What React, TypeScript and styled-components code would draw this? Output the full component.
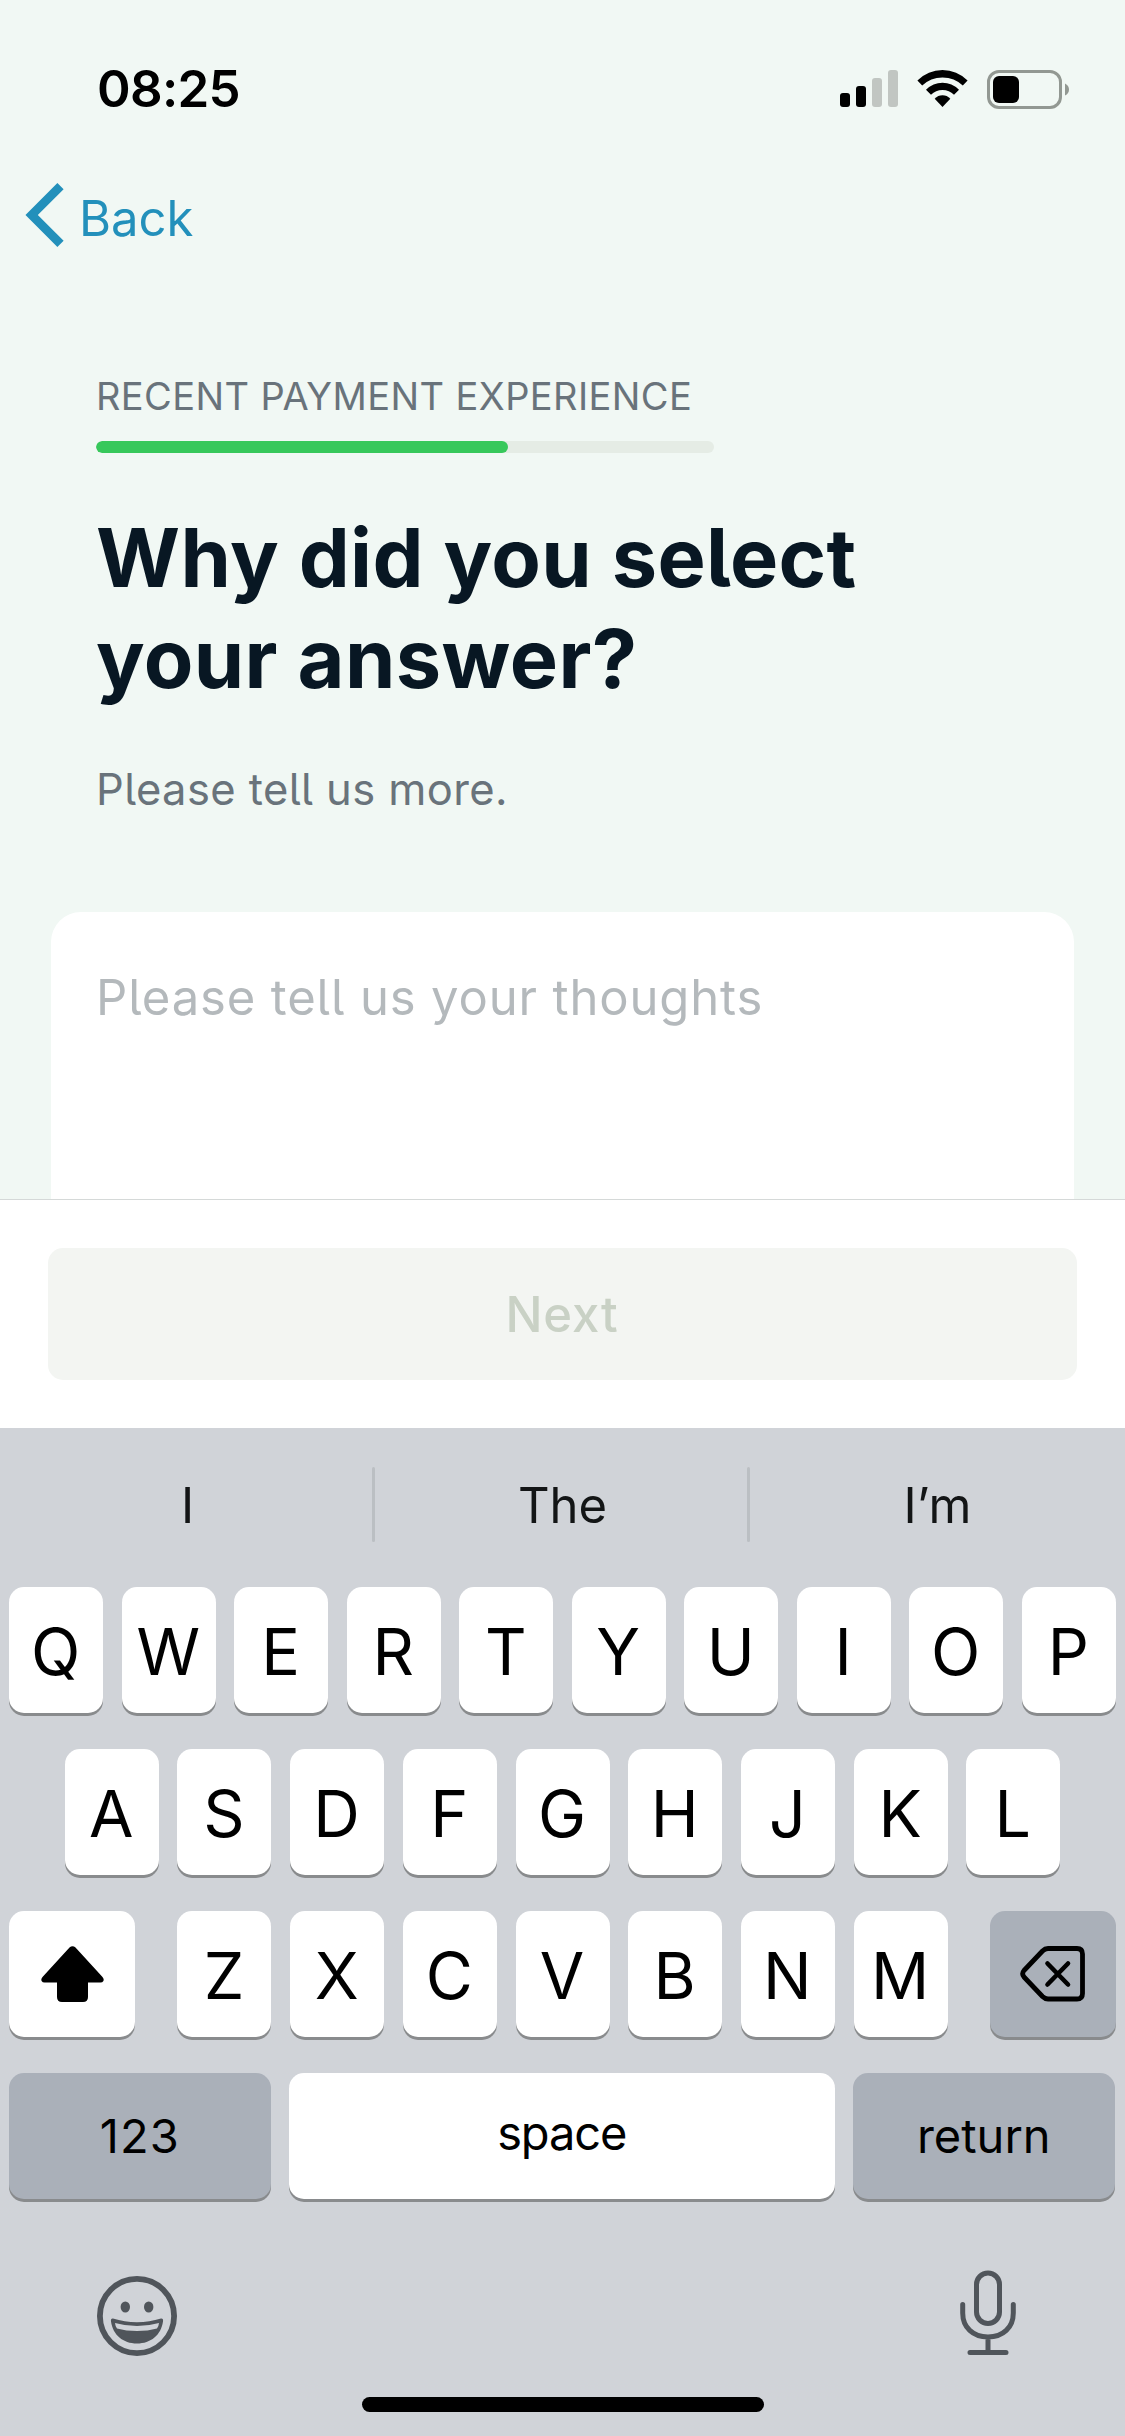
import React from "react";
import styled, { createGlobalStyle } from "styled-components";

const GlobalStyle = createGlobalStyle`
  *, *::before, *::after { box-sizing: border-box; }
  body {
    margin: 0;
    background: #f1f8f4;
    font-family: Inter, Roboto, "Liberation Sans", sans-serif;
    -webkit-font-smoothing: antialiased;
  }
  button { font-family: inherit; border: 0; margin: 0; padding: 0; background: none; }
  svg { display: block; flex: none; }
`;

const Screen = styled.div`
  width: 1125px;
  height: 2436px;
  display: flex;
  flex-direction: column;
  overflow: hidden;
  background: #f1f8f4;
`;

const StatusBar = styled.header`
  height: 178px;
  padding: 0 55px 0 97px;
  display: flex;
  align-items: center;
  justify-content: space-between;
  color: #000;
`;

const Clock = styled.span`
  padding-bottom: 2px;
  font-size: 51px;
  font-weight: 600;
  letter-spacing: -0.7px;
`;

const StatusIcons = styled.div`
  display: flex;
  align-items: center;
  gap: 19px;
`;

const NavBar = styled.nav`
  height: 74px;
  padding-left: 25px;
  display: flex;
`;

const BackButton = styled.button`
  display: flex;
  align-items: center;
  gap: 14px;
  color: #2390bb;
`;

const BackLabel = styled.span`
  padding-top: 6px;
  font-size: 49px;
  font-weight: 400;
`;

const Question = styled.main`
  flex: 1;
  min-height: 0;
  padding: 121px 51px 0;
  display: flex;
  flex-direction: column;
  overflow: hidden;
  font-feature-settings: "cv05";
`;

const Intro = styled.section`
  padding-left: 45px;
  display: flex;
  flex-direction: column;
`;

const Section = styled.div`
  font-size: 38px;
  line-height: 46px;
  font-weight: 400;
  letter-spacing: 0.41px;
  color: #69737b;
`;

const ProgressTrack = styled.div`
  width: 618px;
  height: 12px;
  margin-top: 22px;
  border-radius: 6px;
  overflow: hidden;
  background: #e5ece5;
`;

const ProgressFill = styled.div<{ $ratio: number }>`
  width: ${(p) => p.$ratio * 100}%;
  height: 100%;
  border-radius: 6px;
  background: #37c85b;
`;

const Title = styled.h1`
  margin: 55px 0 0;
  max-width: 800px;
  font-size: 81px;
  line-height: 101px;
  font-weight: 700;
  letter-spacing: 0.4px;
  color: #081723;
`;

const Hint = styled.p`
  margin: 53px 0 0;
  font-size: 43.5px;
  line-height: 52px;
  font-weight: 400;
  letter-spacing: 0.4px;
  color: #69737b;
`;

const AnswerBox = styled.div`
  flex: 1;
  margin-top: 97px;
  padding: 56px 45px 0;
  border-radius: 30px 30px 0 0;
  background: #fff;
`;

const Placeholder = styled.span`
  display: block;
  font-size: 49px;
  line-height: 60px;
  font-weight: 400;
  letter-spacing: 0.85px;
  color: #b4b9bc;
`;

const Footer = styled.footer`
  height: 229px;
  padding: 48px;
  border-top: 1px solid #d5d9d8;
  background: #fff;
`;

const NextButton = styled.button`
  width: 100%;
  height: 132px;
  padding-right: 1px;
  border-radius: 15px;
  background: #f3f5f2;
  color: #c9d1c5;
  font-size: 49px;
  font-weight: 500;
  letter-spacing: 0.9px;
`;

const Keyboard = styled.section`
  height: 1008px;
  display: flex;
  flex-direction: column;
  background: #d0d3d8;
`;

const Suggestions = styled.div`
  height: 154px;
  margin-bottom: 5px;
  display: flex;
  align-items: center;
`;

const Suggestion = styled.span`
  flex: 1;
  text-align: center;
  font-size: 49px;
  color: #131516;
`;

const Divider = styled.i`
  width: 3px;
  height: 75px;
  margin: -1px 0 0 -3px;
  border-radius: 2px;
  background: #bbbfc3;
`;

const Rows = styled.div`
  padding: 0 9px;
  display: flex;
  flex-direction: column;
  gap: 36px;
`;

const KeyRow = styled.div<{ $justify?: string; $gap?: number }>`
  display: flex;
  justify-content: ${(p) => p.$justify ?? "center"};
  gap: ${(p) => p.$gap ?? 18.7}px;
`;

const KeyGroup = styled.div`
  display: flex;
  gap: 18.7px;
`;

const Key = styled.button<{ $width?: number; $dark?: boolean }>`
  width: ${(p) => p.$width ?? 94}px;
  height: 126px;
  padding: 3px 1px 0 0;
  display: flex;
  align-items: center;
  justify-content: center;
  border-radius: 15px;
  background: ${(p) => (p.$dark ? "#aab0b9" : "#fff")};
  box-shadow: 0 3px 0 #898b8d;
  color: #000;
  font-size: 64.5px;
  font-weight: 400;
`;

const IconKey = styled(Key)`
  padding: 0;
`;

const WordKey = styled(Key)<{ $lift?: number; $tracking?: number }>`
  padding: 0 0 ${(p) => p.$lift ?? 1}px;
  font-size: 47px;
  letter-spacing: ${(p) => p.$tracking ?? 0}px;
`;

const BottomBar = styled.div`
  margin-top: 69px;
  padding: 0 109px 0 97px;
  display: flex;
  justify-content: space-between;
`;

const MicSlot = styled.div`
  margin-top: 2px;
`;

const EmojiSlot = styled.div`
  margin-top: 8px;
`;

const HomeIndicator = styled.div`
  width: 402px;
  height: 15px;
  margin: auto auto 24px;
  border-radius: 8px;
  background: #000;
`;

const SignalIcon = () => (
  <svg width="58" height="38" viewBox="0 0 58 38">
    <rect x="0" y="23" width="10" height="14" rx="3" />
    <rect x="16" y="16" width="10" height="21" rx="3" />
    <rect x="32" y="8" width="10" height="29" rx="3" fill="#c1c6c2" />
    <rect x="48" y="0" width="10" height="37" rx="3" fill="#c1c6c2" />
  </svg>
);

const WifiIcon = () => (
  <svg width="51" height="38" viewBox="0 0 51 38">
    <path d="M0.4 10.6Q11 0 25.5 0Q40 0 50.6 10.6L45.8 15.5Q37.5 7.4 25.5 7.4Q13.5 7.4 5.2 15.5Z" />
    <path d="M9 19.7Q16 12.7 25.5 12.7Q35 12.7 42 19.7L37 24.7Q32.3 20 25.5 20Q18.7 20 14 24.7Z" />
    <path d="M17.7 28.7Q21 25.3 25.5 25.3Q30 25.3 33.3 28.7L25.5 37Z" />
  </svg>
);

const BatteryIcon = () => (
  <svg width="83" height="39" viewBox="0 0 83 39">
    <rect x="1.5" y="1.5" width="72" height="36" rx="10.5" fill="none" stroke="#929892" strokeWidth="3" />
    <rect x="6" y="6" width="26" height="27" rx="6" />
    <path d="M78 13.5Q82 15.5 82 19.5Q82 23.5 78 25.5Z" fill="#929892" />
  </svg>
);

const ChevronIcon = () => (
  <svg width="40" height="66" viewBox="0 0 40 66">
    <path d="M35.5 4.2L6.7 33L35.5 61.8" fill="none" stroke="currentColor" strokeWidth="8.8" />
  </svg>
);

const ShiftIcon = () => (
  <svg width="63" height="56" viewBox="0 0 63 56">
    <path d="M28.5 1.5Q31.5 -1.2 34.5 1.5L61.5 31Q63.5 33.5 62.2 35.2Q61.5 36.5 59.5 36.5H47V51Q47 56 42 56H21Q16 56 16 51V36.5H3.5Q1.5 36.5 0.8 35.2Q-0.5 33.5 1.5 31Z" />
  </svg>
);

const DeleteIcon = () => (
  <svg width="66" height="56" viewBox="0 0 66 56" fill="none" stroke="#000" strokeLinecap="round" strokeLinejoin="round">
    <path d="M28 2.5H57Q62.5 2.5 62.5 8V47.5Q62.5 53 57 53H28Q25 53 22.5 50.5L4 31Q1.3 27.75 4 24.5L22.5 5Q25 2.5 28 2.5Z" strokeWidth="4.8" />
    <path d="M27.5 17.5L48 38.5M48 17.5L27.5 38.5" strokeWidth="4.6" />
  </svg>
);

const EmojiIcon = () => (
  <svg width="80" height="80" viewBox="0 0 80 80" fill="#50555b">
    <circle cx="40" cy="40" r="37.1" fill="none" stroke="#50555b" strokeWidth="5.8" />
    <ellipse cx="28.3" cy="31" rx="4.7" ry="5.5" />
    <ellipse cx="51.7" cy="31" rx="4.7" ry="5.5" />
    <path
      fillRule="evenodd"
      d="M16 42.5Q27.5 46.2 40 46.2Q52.5 46.2 64 42.5Q66.5 42.2 66 45.5C64 59 54 67.5 40 67.5C26 67.5 16 59 14 45.5Q13.5 42.2 16 42.5ZM18 47Q18.3 50.3 20 52.5Q29 55 40 55Q51 55 60 52.5Q61.7 50.3 62 47Q51.5 50 40 50Q28.5 50 18 47Z"
    />
  </svg>
);

const MicIcon = () => (
  <svg width="56" height="86" viewBox="0 0 56 86" fill="none" stroke="#50555b" strokeWidth="5" strokeLinecap="round">
    <rect x="16.5" y="3" width="23" height="50.5" rx="11.5" />
    <path d="M2.7 34.5V43C2.7 57.5 13 67 28 67S53.3 57.5 53.3 43V34.5M28 67V82M10 82.5H46" />
  </svg>
);

const letters = (row: string) => row.split("").map((c) => <Key key={c}>{c}</Key>);

export default function App() {
  return (
    <>
      <GlobalStyle />
      <Screen>
        <StatusBar>
          <Clock>08:25</Clock>
          <StatusIcons>
            <SignalIcon />
            <WifiIcon />
            <BatteryIcon />
          </StatusIcons>
        </StatusBar>
        <NavBar>
          <BackButton>
            <ChevronIcon />
            <BackLabel>Back</BackLabel>
          </BackButton>
        </NavBar>
        <Question>
          <Intro>
            <Section>RECENT PAYMENT EXPERIENCE</Section>
            <ProgressTrack>
              <ProgressFill $ratio={2 / 3} />
            </ProgressTrack>
            <Title>Why did you select your answer?</Title>
            <Hint>Please tell us more.</Hint>
          </Intro>
          <AnswerBox>
            <Placeholder>Please tell us your thoughts</Placeholder>
          </AnswerBox>
        </Question>
        <Footer>
          <NextButton>Next</NextButton>
        </Footer>
        <Keyboard>
          <Suggestions>
            <Suggestion>I</Suggestion>
            <Divider />
            <Suggestion>The</Suggestion>
            <Divider />
            <Suggestion>I’m</Suggestion>
          </Suggestions>
          <Rows>
            <KeyRow $gap={18.5}>{letters("QWERTYUIOP")}</KeyRow>
            <KeyRow>{letters("ASDFGHJKL")}</KeyRow>
            <KeyRow $justify="space-between">
              <IconKey $width={126}>
                <ShiftIcon />
              </IconKey>
              <KeyGroup>{letters("ZXCVBNM")}</KeyGroup>
              <IconKey $width={126} $dark>
                <DeleteIcon />
              </IconKey>
            </KeyRow>
            <KeyRow $justify="flex-start" $gap={18}>
              <WordKey $width={261.5} $dark $tracking={1.1}>123</WordKey>
              <WordKey $width={546.5} $lift={8} $tracking={-1.1}>space</WordKey>
              <WordKey $width={261.5} $dark>return</WordKey>
            </KeyRow>
          </Rows>
          <BottomBar>
            <EmojiSlot>
              <EmojiIcon />
            </EmojiSlot>
            <MicSlot>
              <MicIcon />
            </MicSlot>
          </BottomBar>
          <HomeIndicator />
        </Keyboard>
      </Screen>
    </>
  );
}
